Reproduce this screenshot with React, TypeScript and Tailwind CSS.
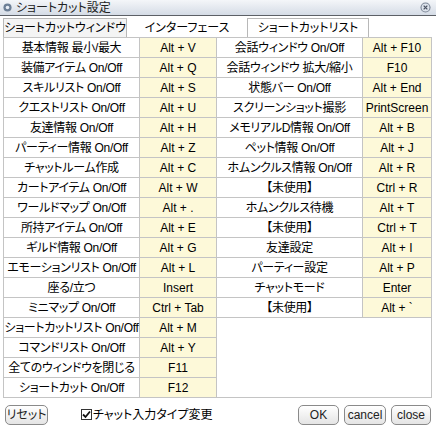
import React from "react";

const leftRows: [string, string][] = [
  ["基本情報 最小/最大", "Alt + V"],
  ["装備アイテム On/Off", "Alt + Q"],
  ["スキルリスト On/Off", "Alt + S"],
  ["クエストリスト On/Off", "Alt + U"],
  ["友達情報 On/Off", "Alt + H"],
  ["パーティー情報 On/Off", "Alt + Z"],
  ["チャットルーム作成", "Alt + C"],
  ["カートアイテム On/Off", "Alt + W"],
  ["ワールドマップ On/Off", "Alt + ."],
  ["所持アイテム On/Off", "Alt + E"],
  ["ギルド情報 On/Off", "Alt + G"],
  ["エモーションリスト On/Off", "Alt + L"],
  ["座る/立つ", "Insert"],
  ["ミニマップ On/Off", "Ctrl + Tab"],
  ["ショートカットリスト On/Off", "Alt + M"],
  ["コマンドリスト On/Off", "Alt + Y"],
  ["全てのウィンドウを閉じる", "F11"],
  ["ショートカット On/Off", "F12"],
];

const rightRows: [string, string][] = [
  ["会話ウィンドウ On/Off", "Alt + F10"],
  ["会話ウィンドウ 拡大/縮小", "F10"],
  ["状態バー On/Off", "Alt + End"],
  ["スクリーンショット撮影", "PrintScreen"],
  ["メモリアルD情報 On/Off", "Alt + B"],
  ["ペット情報 On/Off", "Alt + J"],
  ["ホムンクルス情報 On/Off", "Alt + R"],
  ["【未使用】", "Ctrl + R"],
  ["ホムンクルス待機", "Alt + T"],
  ["【未使用】", "Ctrl + T"],
  ["友達設定", "Alt + I"],
  ["パーティー設定", "Alt + P"],
  ["チャットモード", "Enter"],
  ["【未使用】", "Alt + `"],
];

const Row = ({ label, keyName, labelW, keyW }: { label: string; keyName: string; labelW: string; keyW: string }) => (
  <div className="flex h-[20px] border-b border-[#c4c4c4]">
    <div className={`${labelW} flex items-center justify-center border-r border-[#c4c4c4] whitespace-nowrap tracking-[-0.3px]`}>
      {label}
    </div>
    <div className={`${keyW} flex items-center justify-center bg-[#fdf9d9] whitespace-nowrap`}>{keyName}</div>
  </div>
);

const Btn = ({ children, w }: { children: React.ReactNode; w: string }) => (
  <button className={`${w} h-[20px] rounded-[5px] border border-[#8a8a8a] bg-gradient-to-b from-white to-[#e4e4e4] text-[12px] leading-none text-[#222] flex items-center justify-center whitespace-nowrap`}>
    {children}
  </button>
);

export default function App() {
  return (
    <div
      className="w-[436px] h-[431px] bg-white text-black text-[12px] leading-none overflow-hidden flex flex-col [font-feature-settings:'palt']"
      style={{ fontFamily: '"Liberation Sans", "Noto Sans CJK JP", sans-serif' }}
    >
      {/* title bar */}
      <div className="h-[16px] shrink-0 flex items-center bg-gradient-to-b from-[#f4f6f9] to-[#d5dce6] border-b border-[#5c6066] px-[3px]">
        <svg width="9" height="9" viewBox="0 0 10 10" className="mr-[4px]">
          <circle cx="5" cy="5" r="4.5" fill="#6d7f96" />
          <circle cx="5" cy="5" r="2" fill="#e8eef6" />
        </svg>
        <span className="text-[12px] text-[#222] whitespace-nowrap">ショートカット設定</span>
        <div className="flex-1" />
        <svg width="11" height="11" viewBox="0 0 12 12" className="mr-[2px]">
          <circle cx="6" cy="6" r="5.5" fill="#7c8696" />
          <circle cx="6" cy="6" r="4.3" fill="#dde3ec" />
          <path d="M4 4 L8 8 M8 4 L4 8" stroke="#4a5262" strokeWidth="1.4" />
        </svg>
      </div>

      {/* tabs */}
      <div className="h-[21px] shrink-0 flex items-end pl-[3px]">
        <div className="w-[124px] h-[19px] flex items-center justify-center border border-[#b8b8b8] border-b-0 bg-[#f4f4f4] whitespace-nowrap">
          ショートカットウィンドウ
        </div>
        <div className="w-[120px] h-[19px] flex items-center justify-center whitespace-nowrap">インターフェース</div>
        <div className="w-[122px] h-[19px] flex items-center justify-center border border-[#b8b8b8] border-b-0 whitespace-nowrap">
          ショートカットリスト
        </div>
      </div>

      {/* table */}
      <div className="flex shrink-0 ml-[3px] w-[429px] border-t border-l border-r border-[#c4c4c4] h-[361px]">
        <div className="w-[213px] flex flex-col border-r border-[#c4c4c4]">
          {leftRows.map(([l, k], i) => (
            <Row key={i} label={l} keyName={k} labelW="w-[136px]" keyW="w-[76px]" />
          ))}
        </div>
        <div className="flex-1 flex flex-col border-b border-[#c4c4c4]">
          {rightRows.map(([l, k], i) => (
            <Row key={i} label={l} keyName={k} labelW="w-[146px]" keyW="flex-1" />
          ))}
        </div>
      </div>

      {/* bottom bar */}
      <div className="flex-1 flex items-center px-[5px]">
        <Btn w="w-[43px]">リセット</Btn>
        <div className="ml-[33px] flex items-center">
          <span className="w-[11px] h-[11px] border border-[#333] flex items-center justify-center mr-[1px] bg-white">
            <svg width="9" height="9" viewBox="0 0 9 9">
              <path d="M1 4.5 L3.5 7 L8 1.5" stroke="#111" strokeWidth="1.8" fill="none" />
            </svg>
          </span>
          <span className="whitespace-nowrap">チャット入力タイプ変更</span>
        </div>
        <div className="flex-1" />
        <div className="flex gap-[5px]">
          <Btn w="w-[41px]">OK</Btn>
          <Btn w="w-[42px]">cancel</Btn>
          <Btn w="w-[40px]">close</Btn>
        </div>
      </div>
    </div>
  );
}
